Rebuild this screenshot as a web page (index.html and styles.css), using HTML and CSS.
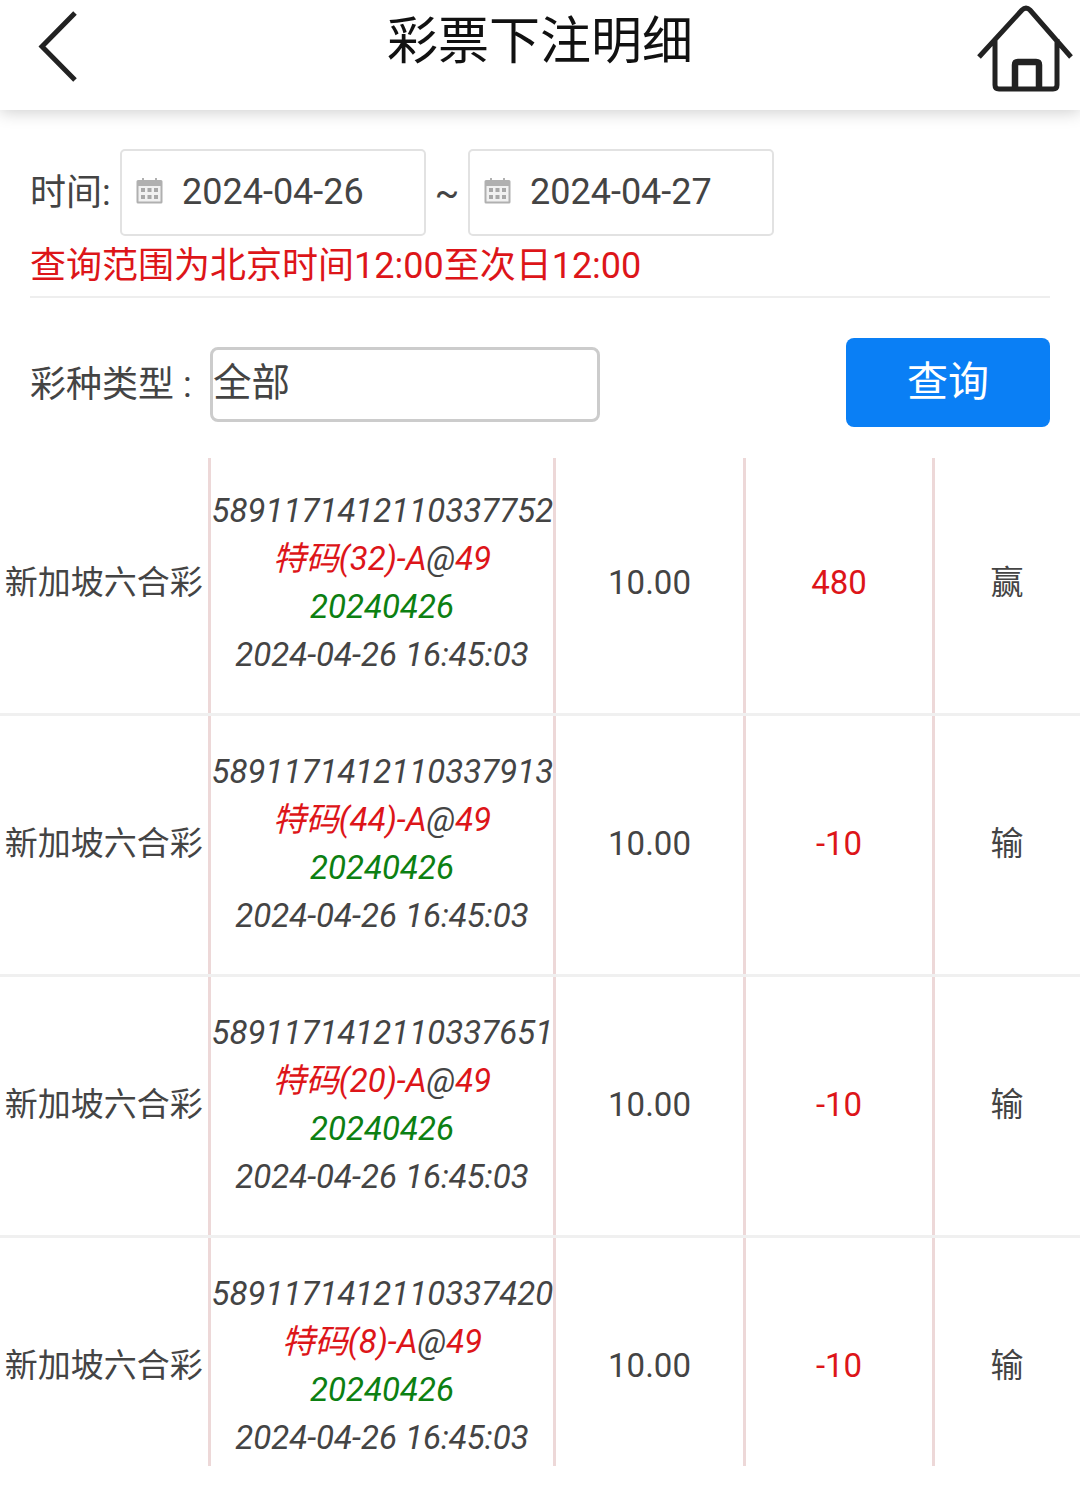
FILE: index.html
```html
<!DOCTYPE html>
<html lang="zh-CN">
<head>
<meta charset="utf-8">
<title>彩票下注明细</title>
<link rel="stylesheet" href="styles.css">
</head>
<body>
<header class="topbar">
  <svg class="back" viewBox="0 0 44 72" width="44" height="72"><path d="M39 3 L6 36.500 L39 70" fill="none" stroke="#222" stroke-width="5"/></svg>
  <h1 class="title">彩票下注明细</h1>
  <svg class="home" viewBox="0 0 100 92" width="100" height="92"><path d="M3 54 L46 7 Q50 3 54 7 L95 54 M19 36 V82 Q19 86 23 86 H77 Q81 86 81 82 V36" fill="none" stroke="#222" stroke-width="5"/><path d="M39 86 V62 Q39 59 42 59 H60 Q63 59 63 62 V86" fill="none" stroke="#222" stroke-width="6.500"/></svg>
</header>
<section class="filters">
  <div class="date-row">
    <span class="date-label">时间:</span>
    <div class="date-box"><svg class="cal" viewBox="0 0 27 27" width="27" height="27"><path d="M2 3 H6 V1 H8 V3 H19 V1 H21 V3 H25 Q26.500 3 26.500 4.500 V25 Q26.500 26.500 25 26.500 H2 Q.5 26.500 .5 25 V4.500 Q.5 3 2 3 Z" fill="#b0b0b0"/><rect x="2.500" y="9" width="22" height="15.500" fill="#f1f1f1"/><path d="M5 11h4v4H5zM11.500 11h4v4h-4zM18 11h4v4h-4zM5 18h4v4H5zM11.500 18h4v4h-4zM18 18h4v4h-4z" fill="#a8a8a8"/></svg><span>2024-04-26</span></div>
    <span class="tilde">~</span>
    <div class="date-box"><svg class="cal" viewBox="0 0 27 27" width="27" height="27"><path d="M2 3 H6 V1 H8 V3 H19 V1 H21 V3 H25 Q26.500 3 26.500 4.500 V25 Q26.500 26.500 25 26.500 H2 Q.5 26.500 .5 25 V4.500 Q.5 3 2 3 Z" fill="#b0b0b0"/><rect x="2.500" y="9" width="22" height="15.500" fill="#f1f1f1"/><path d="M5 11h4v4H5zM11.500 11h4v4h-4zM18 11h4v4h-4zM5 18h4v4H5zM11.500 18h4v4h-4zM18 18h4v4h-4z" fill="#a8a8a8"/></svg><span>2024-04-27</span></div>
  </div>
  <p class="notice">查询范围为北京时间12:00至次日12:00</p>
  <div class="type-row">
    <span class="type-label">彩种类型 :</span>
    <div class="select">全部</div>
    <button class="query">查询</button>
  </div>
</section>
<table class="records">
  <colgroup><col class="c1"><col class="c2"><col class="c3"><col class="c4"><col class="c5"></colgroup>
  <tr>
    <td class="game">新加坡六合彩</td>
    <td class="detail"><div>5891171412110337752</div><div><span class="red">特码(32)-A</span>@<span class="red">49</span></div><div class="green">20240426</div><div>2024-04-26 16:45:03</div></td>
    <td>10.00</td><td class="red">480</td><td class="game">赢</td>
  </tr>
  <tr>
    <td class="game">新加坡六合彩</td>
    <td class="detail"><div>5891171412110337913</div><div><span class="red">特码(44)-A</span>@<span class="red">49</span></div><div class="green">20240426</div><div>2024-04-26 16:45:03</div></td>
    <td>10.00</td><td class="red">-10</td><td class="game">输</td>
  </tr>
  <tr>
    <td class="game">新加坡六合彩</td>
    <td class="detail"><div>5891171412110337651</div><div><span class="red">特码(20)-A</span>@<span class="red">49</span></div><div class="green">20240426</div><div>2024-04-26 16:45:03</div></td>
    <td>10.00</td><td class="red">-10</td><td class="game">输</td>
  </tr>
  <tr>
    <td class="game">新加坡六合彩</td>
    <td class="detail"><div>5891171412110337420</div><div><span class="red">特码(8)-A</span>@<span class="red">49</span></div><div class="green">20240426</div><div>2024-04-26 16:45:03</div></td>
    <td>10.00</td><td class="red">-10</td><td class="game">输</td>
  </tr>
</table>
</body>
</html>
```
FILE: styles.css
```css
* { box-sizing: border-box; }
html, body { margin: 0; padding: 0; background: #fff; }
body {
  font-family: Roboto, "Noto Sans CJK SC", sans-serif;
  color: #333;
  height: 1487px;
  overflow: hidden;
}
.topbar {
  height: 110px;
  display: flex;
  align-items: flex-start;
  justify-content: space-between;
  background: #fff;
  box-shadow: 0 2px 16px rgba(0, 0, 0, .2);
  padding: 0 4px 0 36px;
  position: relative;
}
.back { margin-top: 10px; }
.home { margin-top: 3px; }
.title {
  margin: 0;
  position: absolute;
  left: 0;
  right: 0;
  top: 12px;
  text-align: center;
  font-size: 51px;
  line-height: 60px;
  font-weight: 400;
  color: #111;
}
.filters { padding: 40px 30px 0; }
.date-row { display: flex; align-items: center; height: 85px; }
.date-label { font-size: 36px; width: 90px; color: #444; padding-bottom: 8px; }
.date-box {
  width: 306px;
  height: 87px;
  border: 2px solid #e2e2e2;
  border-radius: 5px;
  display: flex;
  align-items: center;
  padding: 0 0 2px 14px;
  font-size: 36px;
  color: #444;
  gap: 19px;
}
.cal { flex: none; margin-top: -2px; }
.tilde { width: 42px; text-align: center; font-size: 36px; color: #444; }
.notice {
  margin: 8px 0 0;
  height: 55px;
  line-height: 46px;
  font-size: 36px;
  color: #dd1519;
  border-bottom: 2px solid #eee;
  white-space: nowrap;
}
.type-row { display: flex; align-items: center; margin-top: 40px; height: 89px; }
.type-label { width: 180px; font-size: 36px; color: #444; white-space: nowrap; padding-bottom: 4px; }
.select {
  width: 390px;
  height: 75px;
  margin-top: 4px;
  border: 3px solid #ccc;
  border-radius: 8px;
  font-size: 38.500px;
  line-height: 66px;
  color: #444;
}
.query {
  margin-left: auto;
  width: 204px;
  height: 89px;
  padding: 0 0 10px;
  border: 0;
  border-radius: 8px;
  background: #0a7ff5;
  color: #fff;
  font: inherit;
  font-size: 41px;
}
.records {
  margin-top: 31px;
  width: 1080px;
  border-collapse: collapse;
  table-layout: fixed;
  font-size: 33px;
}
.c1 { width: 209px; }
.c2 { width: 345px; }
.c3 { width: 190px; }
.c4 { width: 189px; }
.c5 { width: 147px; }
.records td {
  border-right: 3px solid #edd8d8;
  border-bottom: 3px solid #f0f0f0;
  text-align: center;
  padding: 0 0 2px 1px;
  height: 261px;
  color: #444;
  white-space: nowrap;
  line-height: 48px;
}
.records td:last-child { border-right-width: 1px; }
.records td.game { padding-left: 0; }
.records tr:first-child td { height: 256px; padding-bottom: 4px; }
.records tr:last-child td { border-bottom: 0; height: 230px; vertical-align: top; }
.records tr:last-child td:not(.detail) { padding-top: 104px; }
.records td.red, .red { color: #dd1519; }
.detail { font-style: italic; }
.records .green { color: #0c8012; }
.records tr:last-child td.detail { padding-top: 32px; }
```
